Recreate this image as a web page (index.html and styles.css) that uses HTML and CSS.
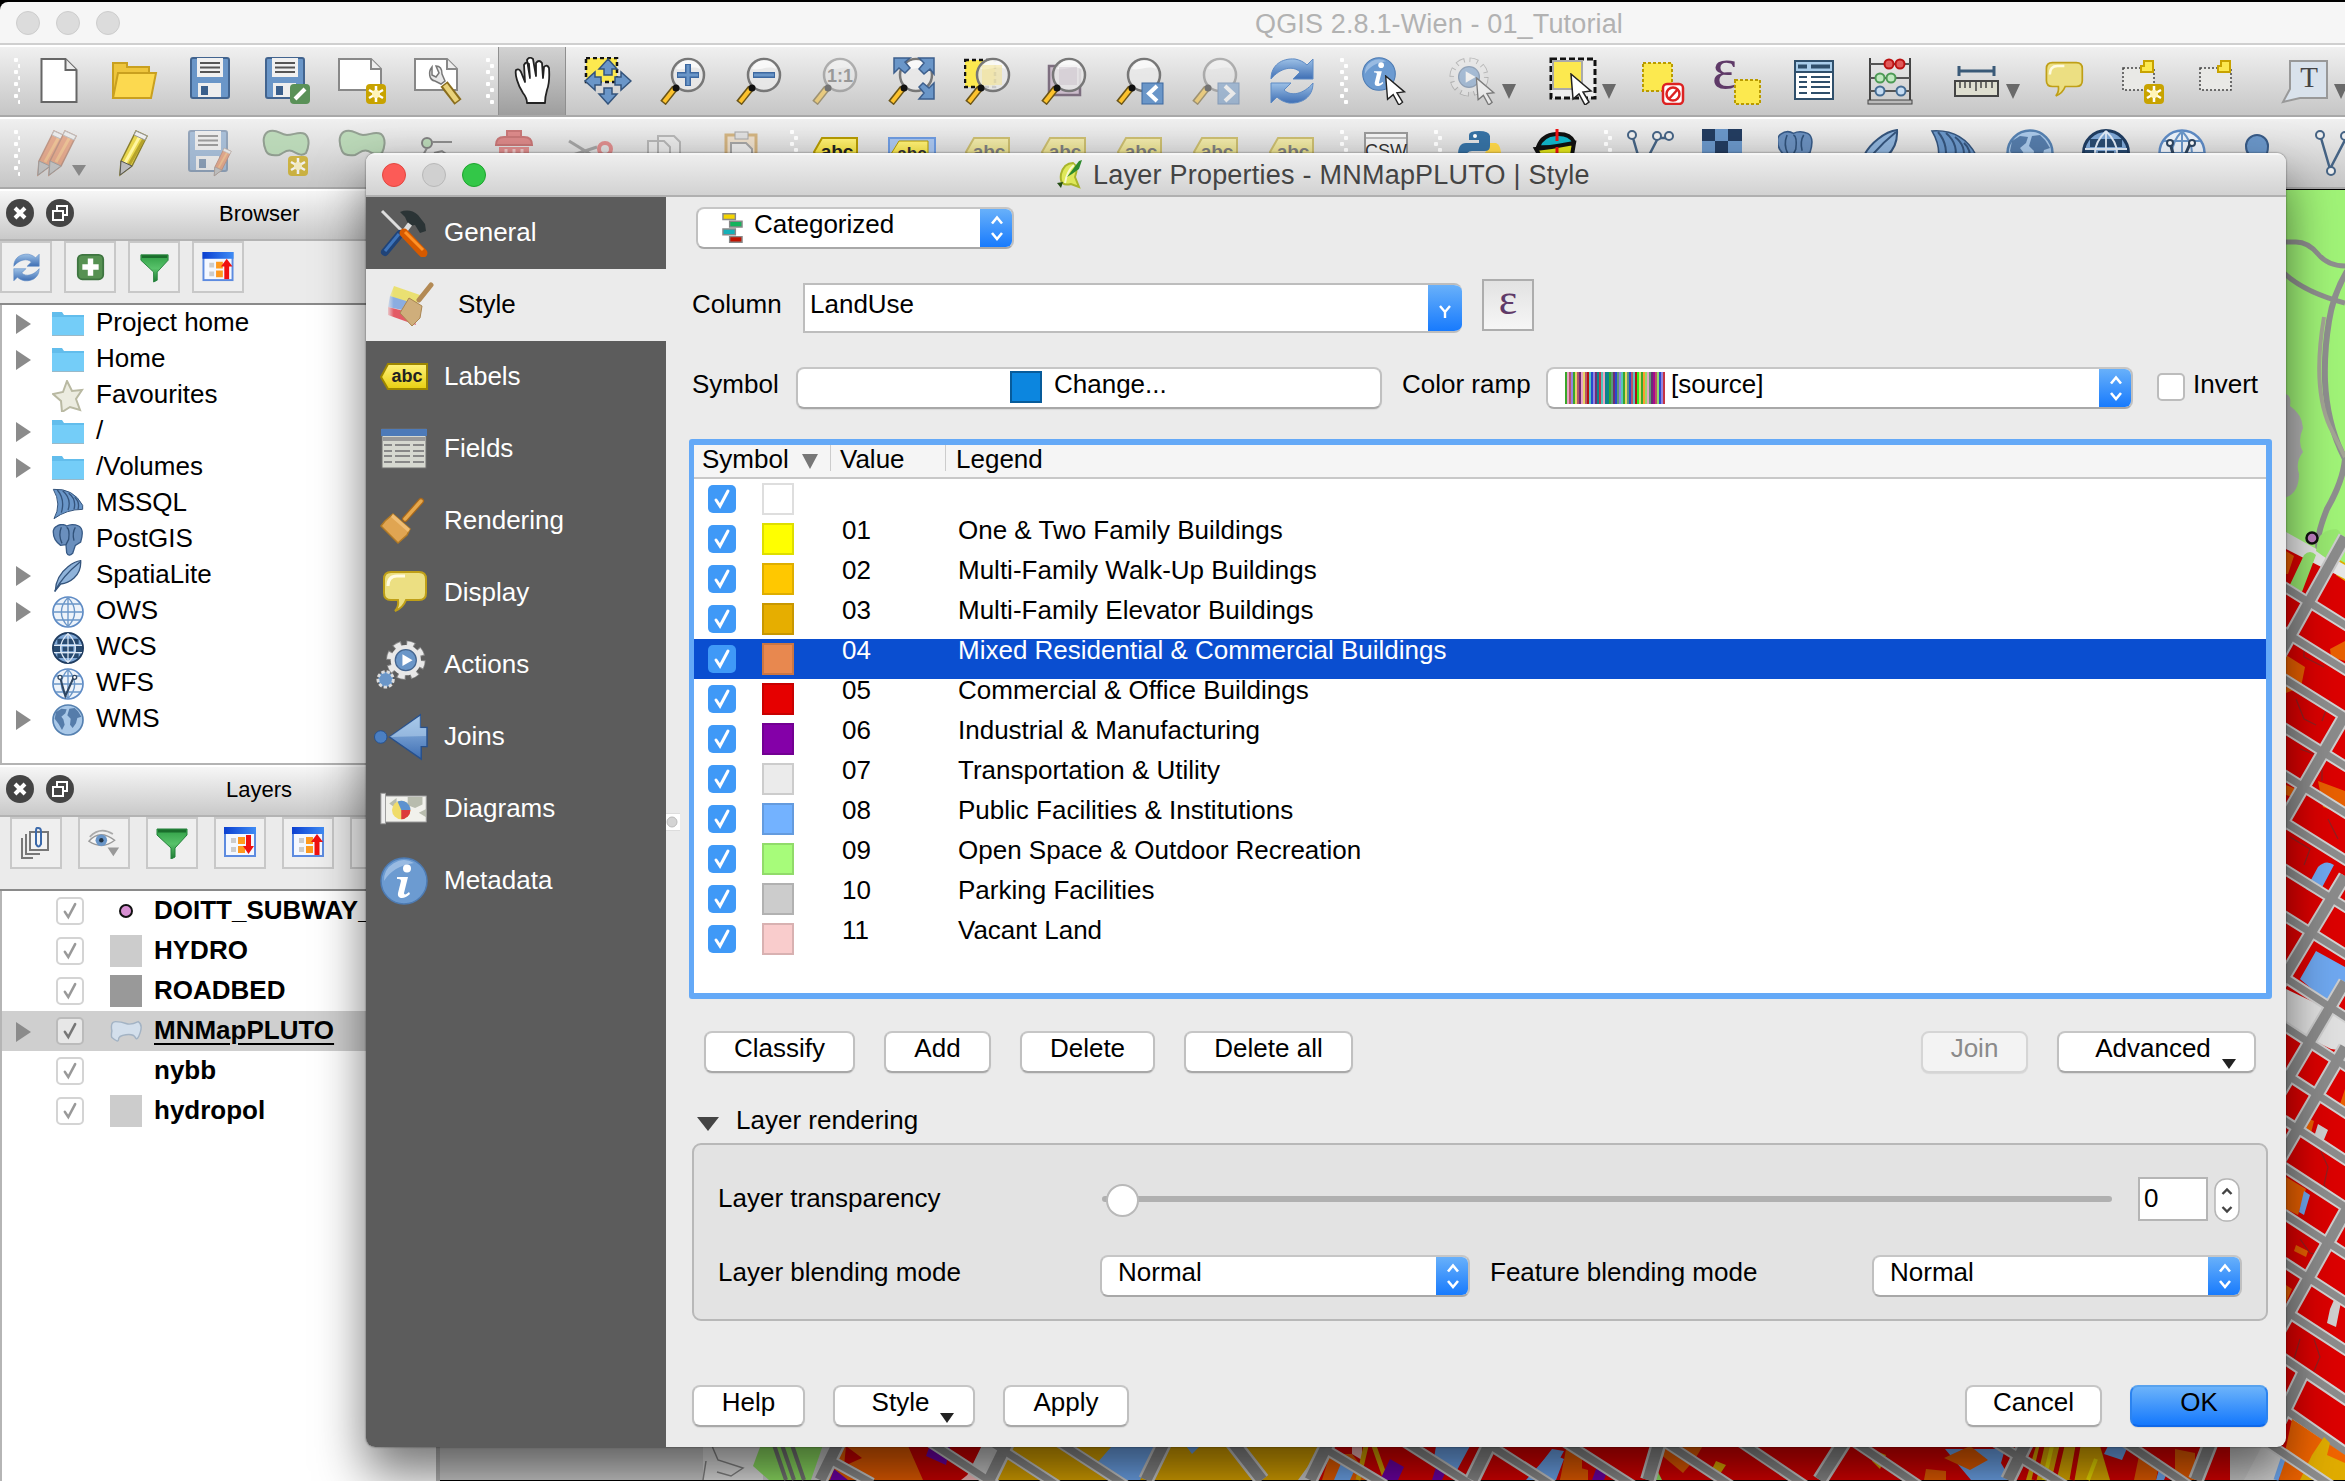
FILE: index.html
```html
<!DOCTYPE html>
<html lang="en">
<head>
<meta charset="utf-8">
<title>QGIS 2.8.1-Wien - 01_Tutorial</title>
<link rel="stylesheet" href="styles.css">
</head>
<body>
<svg class="defs" width="0" height="0" aria-hidden="true">
<defs>
<linearGradient id="g-blue" x1="0" y1="0" x2="0" y2="1"><stop offset="0" stop-color="#9cc0e6"/><stop offset="1" stop-color="#3f6fb4"/></linearGradient>
<linearGradient id="g-green" x1="0" y1="0" x2="0" y2="1"><stop offset="0" stop-color="#2f9e45"/><stop offset=".5" stop-color="#58c26a"/><stop offset="1" stop-color="#1d7a33"/></linearGradient>
<linearGradient id="g-head" x1="0" y1="0" x2="1" y2="0"><stop offset="0" stop-color="#0b3fd0"/><stop offset="1" stop-color="#3f8cf5"/></linearGradient>
<linearGradient id="g-tag" x1="0" y1="0" x2="0" y2="1"><stop offset="0" stop-color="#fff27a"/><stop offset="1" stop-color="#e8cf10"/></linearGradient>
<symbol id="new" viewBox="0 0 48 48"><path d="M7.500 2h24l11 11v32h-35z" fill="#fff" stroke="#666" stroke-width="2"/><path d="M31.500 2v11h11" fill="#ececec" stroke="#666" stroke-width="2"/></symbol>
<symbol id="open" viewBox="0 0 48 48"><path d="M3 41V6h14v4h22v8" fill="#eec53c" stroke="#c9a01f" stroke-width="2"/><path d="M3 41L8 16h38l-5 25z" fill="#fcd94f" stroke="#c9a01f" stroke-width="2"/></symbol>
<symbol id="save" viewBox="0 0 48 48"><rect x="5" y="1" width="38" height="40" rx="2" fill="#6a96c8" stroke="#42648f" stroke-width="2"/><rect x="11" y="1" width="26" height="19" fill="#f0f0f0"/><path d="M14 6h20M14 10.500h20M14 15h20" stroke="#555" stroke-width="2"/><rect x="12" y="26" width="23" height="14" fill="#eee"/><rect x="15" y="29" width="7" height="9" fill="#3a5f8c"/></symbol>
<symbol id="saveas" viewBox="0 0 48 48"><use href="#save" x="-1" width="48" height="48"/><rect x="28" y="27" width="20" height="20" rx="4" fill="#5a9158"/><path d="M33 42l10-10" stroke="#fff" stroke-width="4"/></symbol>
<symbol id="star-badge" viewBox="0 0 22 22"><rect x="1" y="1" width="20" height="20" rx="4" fill="#c8a300"/><path d="M11 3v16M4 7l14 8M4 15l14-8" stroke="#fff" stroke-width="2.500"/><circle cx="11" cy="11" r="4" fill="#fff4b8"/></symbol>
<symbol id="composer" viewBox="0 0 48 48"><path d="M1 2h32l10 10v21H1z" fill="#fff" stroke="#888" stroke-width="2"/><path d="M33 2v10h10" fill="#eee" stroke="#888" stroke-width="2"/></symbol>
<symbol id="newcomp" viewBox="0 0 48 48"><use href="#composer" width="48" height="48"/><use href="#star-badge" x="27" y="26" width="22" height="22"/></symbol>
<symbol id="compmgr" viewBox="0 0 48 48"><use href="#composer" width="48" height="48"/><path d="M18 10c-4 5-3 13 3 14l6 3 4-3-3-7c0-5-2-8-6-8l3 7-3 4-4-2z" fill="#e8e8e8" stroke="#777" stroke-width="1.500"/><path d="M30 27l14 18" stroke="#8a6d1c" stroke-width="9"/><path d="M31 28l12 16" stroke="#e9d27a" stroke-width="5"/></symbol>
<symbol id="hand" viewBox="0 0 48 48"><path d="M17 46q0-5-4-10-4-6-6-13-2-7-1-10 3-2 5 2l4 10-1-17q2-4 5-1l1 14-3-18q2-4 6-1l3 17V6q3-4 6 0l1 15 1-11q3-3 5 1 1 14-2 22-2 7-2 13z" transform="translate(2 0)" fill="#fff" stroke="#222" stroke-width="1.800" stroke-linejoin="round"/></symbol>
<symbol id="pansel" viewBox="0 0 48 48"><rect x="2" y="1" width="31" height="24" fill="#fce94f" stroke="#111" stroke-width="2.500" stroke-dasharray="4 3"/><path d="M24 2l9 10h-5v6h-8v-6h-5zM24 47l9-10h-5v-6h-8v6h-5zM1 24l10-9v5h6v8h-6v5zM47 24l-10-9v5h-6v8h6v5z" fill="#6a96c8" stroke="#34547c" stroke-width="1.500"/></symbol>
<symbol id="mag" viewBox="0 0 48 48"><path d="M3 46L15 31" stroke="#6b5416" stroke-width="7"/><path d="M4 45L15 31" stroke="#fcc22d" stroke-width="4"/><circle cx="28" cy="18" r="16" fill="#e9e9e9" fill-opacity=".85" stroke="#777" stroke-width="2.500"/><path d="M16 12a13 13 0 0 1 12-9c8 0 12 5 12 9-8-4-16 2-24 0z" fill="#fff" opacity=".7"/><circle cx="16" cy="31" r="3.500" fill="#111"/></symbol>
<symbol id="zin" viewBox="0 0 48 48"><use href="#mag" width="48" height="48"/><path d="M28 7v22M17 18h22" stroke="#3d68a0" stroke-width="6"/><path d="M28 8v20M18 18h20" stroke="#6a96c8" stroke-width="3"/></symbol>
<symbol id="zout" viewBox="0 0 48 48"><use href="#mag" width="48" height="48"/><path d="M17 18h22" stroke="#3d68a0" stroke-width="6"/><path d="M18 18h20" stroke="#6a96c8" stroke-width="3"/></symbol>
<symbol id="z11" viewBox="0 0 48 48"><use href="#mag" width="48" height="48"/><text x="28" y="25" font-size="18" font-weight="bold" text-anchor="middle" fill="#555">1:1</text></symbol>
<symbol id="zfull" viewBox="0 0 48 48"><use href="#mag" width="48" height="48"/><path d="M6 1h16l-5 4 5 6-5 5-6-5-5 5zM46 1v16l-4-5-6 5-5-5 5-6-5-5zM46 42v-16l-5 5-6-5-4 4 5 6-5 6z" fill="#6a96c8" stroke="#3d5f8d" stroke-width="1.500"/></symbol>
<symbol id="zsel" viewBox="0 0 48 48"><rect x="1" y="3" width="30" height="27" fill="#fce94f" stroke="#111" stroke-width="2.500" stroke-dasharray="4 3"/><use href="#mag" x="1" width="48" height="48"/><rect x="18" y="8" width="20" height="20" fill="#f3e28a" opacity=".5"/></symbol>
<symbol id="zlayer" viewBox="0 0 48 48"><rect x="9" y="9" width="31" height="29" fill="#cbbccb" stroke="#7d6e7f" stroke-width="2.500"/><use href="#mag" x="1" width="48" height="48"/><rect x="19" y="10" width="18" height="18" fill="#c9c0c9" opacity=".5"/></symbol>
<symbol id="zlast" viewBox="0 0 48 48"><use href="#mag" width="48" height="48"/><rect x="26" y="26" width="21" height="21" fill="#6a96c8" stroke="#3d68a0"/><path d="M41 29l-8 7.500 8 7.500" fill="none" stroke="#fff" stroke-width="4"/></symbol>
<symbol id="znext" viewBox="0 0 48 48"><use href="#mag" width="48" height="48"/><rect x="26" y="26" width="21" height="21" fill="#6a96c8" stroke="#3d68a0"/><path d="M33 29l8 7.500-8 7.500" fill="none" stroke="#fff" stroke-width="4"/></symbol>
<symbol id="refresh" viewBox="0 0 48 48"><path d="M3 22C3 8 14 1 27 2c5 1 9 3 12 6l6-6v20H25l7-7C25 8 12 11 3 22z" fill="url(#g-blue)" stroke="#5d8ac4"/><path d="M45 26c0 14-11 21-24 20-5-1-9-3-12-6l-6 6V26h20l-7 7c7 7 20 4 29-7z" fill="url(#g-blue)" stroke="#5d8ac4"/></symbol>
<symbol id="cursor" viewBox="0 0 24 32"><path d="M1 1l20 17-8 1 6 10-4 3-6-11-6 5z" fill="#fff" stroke="#222" stroke-width="1.500"/></symbol>
<symbol id="info" viewBox="0 0 48 48"><circle cx="24" cy="24" r="23" fill="#6c9bd1" stroke="#4d7bb3" stroke-width="1.500"/><path d="M4 24A20 20 0 0 1 34 6C20 8 10 14 4 24z" fill="#a5c3e6" opacity=".8"/><circle cx="27" cy="11.500" r="4" fill="#fff"/><path d="M17 20h11l-4 16c0 2 2 2 5-1l1 2c-6 6-13 5-12-1l3-12c0-2-2-2-4-2z" fill="#fff"/></symbol>
<symbol id="identify" viewBox="0 0 48 48"><use href="#info" x="0" y="0" width="34" height="34"/><use href="#cursor" x="22" y="18" width="24" height="30"/></symbol>
<symbol id="gear" viewBox="0 0 48 48"><circle cx="24" cy="24" r="18" fill="none" stroke="#8a8a8a" stroke-width="11" stroke-dasharray="9 5.137"/><circle cx="24" cy="24" r="18" fill="none" stroke="#e8e8e8" stroke-width="9" stroke-dasharray="7 7.137" stroke-dashoffset="-1"/><circle cx="24" cy="24" r="18" fill="#e8e8e8"/><circle cx="24" cy="24" r="12.500" fill="#6a96c8" stroke="#44658f" stroke-width="1.500"/><path d="M20 17l12 7-12 7z" fill="#fff"/></symbol>
<symbol id="action" viewBox="0 0 48 48"><use href="#gear" x="0" y="0" width="40" height="40"/><use href="#cursor" x="26" y="20" width="22" height="28"/></symbol>
<symbol id="select" viewBox="0 0 48 48"><rect x="2" y="2" width="44" height="39" fill="#eee" stroke="#111" stroke-width="3" stroke-dasharray="6 3"/><rect x="4" y="4" width="29" height="28" fill="#fce94f" stroke="#aaa" stroke-width="2"/><use href="#cursor" x="20" y="16" width="26" height="32"/></symbol>
<symbol id="deselect" viewBox="0 0 48 48"><rect x="5" y="6" width="29" height="28" fill="#fce94f" stroke="#b99b00" stroke-width="2" stroke-dasharray="3 2"/><rect x="25" y="27" width="20" height="20" rx="4" fill="#fff" stroke="#d22" stroke-width="2.500"/><circle cx="35" cy="37" r="6.500" fill="none" stroke="#d22" stroke-width="2.500"/><path d="M31 42l9-10" stroke="#d22" stroke-width="2.500"/></symbol>
<symbol id="eps" viewBox="0 0 48 48"><text x="-2" y="31" font-family="Liberation Serif, serif" font-size="60" fill="#5f3a68">ε</text><rect x="21" y="23" width="25" height="24" fill="#fce94f" stroke="#b99b00" stroke-width="2" stroke-dasharray="3 2"/></symbol>
<symbol id="table" viewBox="0 0 48 48"><rect x="5" y="4" width="38" height="38" fill="#fff" stroke="#2f4f6b" stroke-width="2"/><rect x="6" y="5" width="36" height="9" fill="#a9cdea"/><path d="M8 9.500h9M21 9.500h19" stroke="#2f4f6b" stroke-width="4"/><path d="M6 15h36" stroke="#2f4f6b" stroke-width="2"/><path d="M9 20h8M21 20h19M9 25h8M21 25h19M9 30h8M21 30h19M9 36h8M21 36h19" stroke="#2f4f6b" stroke-width="2"/></symbol>
<symbol id="abacus" viewBox="0 0 48 48"><path d="M4 1v44M44 1v44" stroke="#444" stroke-width="2"/><path d="M4 7h40M4 21h40M4 34h40" stroke="#555" stroke-width="2"/><rect x="2" y="43" width="44" height="4" fill="#bbb" stroke="#444"/><g stroke-width="2"><g fill="#e05a5a" stroke="#b11"><circle cx="23" cy="7" r="4.500"/><circle cx="34" cy="7" r="4.500"/></g><g fill="#bfe8bf" stroke="#4d9a55"><circle cx="14" cy="21" r="4.500"/><circle cx="25" cy="21" r="4.500"/></g><g fill="#c6dcf2" stroke="#456c93"><circle cx="14" cy="34" r="4.500"/><circle cx="35" cy="34" r="4.500"/></g></g></symbol>
<symbol id="measure" viewBox="0 0 48 48"><path d="M6 9v10M41 9v10M6 14h35" stroke="#3a5a78" stroke-width="3"/><rect x="2" y="24" width="43" height="15" fill="#deded0" stroke="#444" stroke-width="2"/><path d="M7 25v6M12 25v6M17 25v6M23 25v9M28 25v6M33 25v6M39 25v6" stroke="#444" stroke-width="1.500"/></symbol>
<symbol id="bubble" viewBox="0 0 48 48"><path d="M11 3h28q7 0 7 7v14q0 7-7 7H26q-3 8-11 11 4-4 3-11h-7q-7 0-7-7V10q0-7 7-7z" fill="#ecdf82" stroke="#bf9f17" stroke-width="2"/><path d="M8 17q0-10 9-10h8" fill="none" stroke="#fffbe0" stroke-width="3"/></symbol>
<symbol id="bubbles" viewBox="0 0 48 48"><use href="#bubble" x="1" y="1" width="41" height="45"/></symbol>
<symbol id="bm" viewBox="0 0 48 48"><rect x="6" y="11" width="31" height="22" fill="#e9e9e6" stroke="#444" stroke-width="1.500" stroke-dasharray="2 2"/><path d="M27 4h9v11H24v-6h3z" fill="#fce94f" stroke="#c8a300" stroke-width="2"/></symbol>
<symbol id="bmnew" viewBox="0 0 48 48"><use href="#bm" x="-1" width="48" height="48"/><use href="#star-badge" x="25" y="26" width="22" height="22"/></symbol>
<symbol id="tann" viewBox="0 0 48 48"><path d="M9 4h37v37H19L2 45l7-13z" fill="#d9e2ec" stroke="#999" stroke-width="2"/><text x="28" y="30" font-family="Liberation Serif, serif" font-size="29" text-anchor="middle" fill="#444">T</text></symbol>
<symbol id="pencil" viewBox="0 0 48 48"><path d="M11 32L26 2l11 5-15 30-12 9z" fill="#e8d64d" stroke="#8a7f2c" stroke-width="1.500"/><path d="M15 34L31 5" stroke="#fff6a0" stroke-width="3"/><path d="M19 36L35 8" stroke="#b6a32a" stroke-width="3"/><path d="M11 32l11 5-12 9z" fill="#bbb" stroke="#555"/><path d="M26 2l11 5-2 4-11-5z" fill="#eee" stroke="#999"/></symbol>
<symbol id="redpencil" viewBox="0 0 48 48"><path d="M11 32L26 2l11 5-15 30-12 9z" fill="#e0713d" stroke="#9c4e2e" stroke-width="1.500"/><path d="M17 33L32 6" stroke="#f3a04b" stroke-width="3"/><path d="M11 32l11 5-12 9z" fill="#aaa" stroke="#666"/><path d="M26 2l11 5-2 4-11-5z" fill="#eee" stroke="#999"/></symbol>
<symbol id="edits" viewBox="0 0 48 48"><use href="#redpencil" x="-6" width="48" height="48"/><use href="#redpencil" x="5" width="48" height="48"/></symbol>
<symbol id="savee" viewBox="0 0 48 48"><use href="#save" x="-2" y="1" width="48" height="48"/><use href="#redpencil" x="22" y="18" width="30" height="30"/></symbol>
<symbol id="blob" viewBox="0 0 48 48"><path d="M4 22C0 12 1 4 8 2c8-2 10 4 17 4S37 2 43 5c6 5 3 15 1 19-5 4-9 0-14-2-6-2-8 2-13 4-7 1-11 0-13-4z" fill="#a8d3a4" stroke="#6d7f6c" stroke-width="2"/></symbol>
<symbol id="blobnew" viewBox="0 0 48 48"><use href="#blob" width="48" height="48"/><use href="#star-badge" x="25" y="26" width="22" height="22"/></symbol>
<symbol id="node" viewBox="0 0 48 48"><circle cx="13" cy="14" r="5" fill="#a8d3a4" stroke="#555" stroke-width="2"/><path d="M18 13h20M13 19l-5 9M20 24l8-2 8 6" stroke="#666" stroke-width="2" fill="none"/></symbol>
<symbol id="trash" viewBox="0 0 48 48"><path d="M17 7V2h14v5M6 16q0-8 8-8h20q8 0 8 8z" fill="#d85f5f" stroke="#b44" stroke-width="2"/><path d="M9 18h30v28H9z" fill="#d66"/><path d="M16 20v24M24 20v24M32 20v24" stroke="#f3b8b8" stroke-width="3"/></symbol>
<symbol id="cut" viewBox="0 0 48 48"><path d="M3 12l26 16M7 26l24-8" stroke="#888" stroke-width="3"/><circle cx="39" cy="20" r="6" fill="none" stroke="#d66" stroke-width="4"/></symbol>
<symbol id="copy" viewBox="0 0 48 48"><path d="M16 7h16l6 6v22H16zM6 12h16l6 6v22H6z" fill="#eee" stroke="#888" stroke-width="2"/></symbol>
<symbol id="paste" viewBox="0 0 48 48"><path d="M8 6h30v36H8z" fill="#f0dcc0" stroke="#c99b51" stroke-width="3"/><rect x="17" y="3" width="13" height="7" fill="#ddd" stroke="#888"/><path d="M13 14h15l6 6v20H13z" fill="#eee" stroke="#888" stroke-width="2"/></symbol>
<symbol id="tag" viewBox="0 0 48 48"><path d="M2 23l8-14h35v28H10z" fill="url(#g-tag)" stroke="#b59a00" stroke-width="2"/><text x="25" y="29" font-size="19" font-weight="bold" text-anchor="middle" fill="#222">abc</text></symbol>
<symbol id="tagsel" viewBox="0 0 48 48"><rect x="1" y="9" width="46" height="34" fill="#a9c5ee" stroke="#6e9be0" stroke-width="2"/><path d="M3 25l8-13h29v28H11z" fill="url(#g-tag)" stroke="#b59a00"/><text x="24" y="30" font-size="17" font-weight="bold" text-anchor="middle" fill="#333">abc</text></symbol>
<symbol id="csw" viewBox="0 0 48 48"><rect x="3" y="4" width="42" height="40" fill="#f4f4f4" stroke="#999" stroke-width="2"/><path d="M4 9h40" stroke="#bbb" stroke-width="2"/><text x="24" y="28" font-size="18" text-anchor="middle" fill="#333">CSW</text></symbol>
<symbol id="python" viewBox="0 0 48 48"><path d="M34 14h6q5 2 5 12t-6 12H22z" fill="#ffd94a"/><path d="M2 26q0-12 8-12h13v-3H13V6q0-4 10-4t11 5v10q0 5-5 5H16q-6 0-6 7v4H6q-4-2-4-7z" fill="#3672a4"/><circle cx="19" cy="7" r="2" fill="#fff"/></symbol>
<symbol id="grassm" viewBox="0 0 48 48"><path d="M6 18Q10 6 24 5t18 8q-4 7-36 5z" fill="#12b6c9" stroke="#111" stroke-width="4"/><path d="M4 20q18-2 38-6l-3 18-10 6H14z" fill="#dfe21a" stroke="#111" stroke-width="4"/><path d="M25 0v12M25 18v10" stroke="#e11" stroke-width="3"/></symbol>
<symbol id="vlay" viewBox="0 0 48 48"><path d="M7 9l9 31L32 9h9" fill="none" stroke="#456384" stroke-width="2.500"/><g fill="#eee" stroke="#456384" stroke-width="2"><circle cx="6" cy="6" r="4"/><circle cx="31" cy="7" r="4"/><circle cx="43" cy="7" r="4"/><circle cx="17" cy="42" r="4"/></g></symbol>
<symbol id="checker" viewBox="0 0 48 48"><path d="M0 0h40v48H0z" fill="#6a96c8"/><path d="M0 0h13v12H0zM26 0h14v12H26zM13 12h13v13H13zM0 25h13v13H0zM26 25h14v13H26z" fill="#233c60"/></symbol>
<symbol id="pg" viewBox="0 0 48 48"><path d="M6 4Q14-2 22 3q8-4 18 0 9 5 3 24l-8 5-4 12q-6 6-9-1l-1-12-8 1Q1 24 2 10q1-4 4-6z" fill="#6a8fbd" stroke="#375a86" stroke-width="2"/><path d="M14 5q-5 12 1 24M22 5q5 2 3 18l-4 8M35 5q-5 8-2 20" fill="none" stroke="#2f5078" stroke-width="2"/></symbol>
<symbol id="pgb" viewBox="0 0 48 48"><use href="#pg" x="-2" y="0" width="38" height="42"/></symbol>
<symbol id="feather" viewBox="0 0 48 48"><path d="M5 46Q6 24 24 10 34 2 43 1q1 16-10 26-9 8-20 9z" fill="#8fb3da" stroke="#34547c" stroke-width="2"/><path d="M4 47Q16 24 42 3" fill="none" stroke="#34547c" stroke-width="2"/></symbol>
<symbol id="shell" viewBox="0 0 48 48"><path d="M2 2q30-2 44 24v6Q22 32 3 46q12-22-1-44z" fill="#6a96c8" stroke="#34547c" stroke-width="1.500"/><path d="M8 3q12 14 6 34M16 4q14 12 8 29M25 8q12 9 8 24M34 14q8 7 5 18" fill="none" stroke="#34547c" stroke-width="2"/></symbol>
<symbol id="globe" viewBox="0 0 48 48"><circle cx="24" cy="24" r="22.500" fill="#edf3fa" stroke="#5d8ac4" stroke-width="2.500"/><path d="M24 2v44M2 24h44M6 12h36M6 36h36M24 2Q4 24 24 46M24 2q20 22 0 44" fill="none" stroke="#6a96c8" stroke-width="2"/></symbol>
<symbol id="globed" viewBox="0 0 48 48"><circle cx="24" cy="24" r="22.500" fill="#7ea7d6" stroke="#1f3c60" stroke-width="3"/><path d="M8 10h32v8H8zM16 22h16v7H16zM8 32h32v7H8zM3 19h9v12H3zM36 19h9v12h-9z" fill="#284a70"/><path d="M24 2v44M3 20h42M3 31h42M24 2Q2 24 24 46M24 2q22 22 0 44" fill="none" stroke="#dfe9f5" stroke-width="1.800"/></symbol>
<symbol id="globev" viewBox="0 0 48 48"><use href="#globe" width="48" height="48"/><path d="M12 14l8 28 12-27h4" fill="none" stroke="#2f4763" stroke-width="3"/><circle cx="12" cy="14" r="3" fill="#fff" stroke="#2f4763" stroke-width="2"/><circle cx="34" cy="14" r="3" fill="#fff" stroke="#2f4763" stroke-width="2"/></symbol>
<symbol id="globem" viewBox="0 0 48 48"><circle cx="24" cy="24" r="22.500" fill="#a9c8e8" stroke="#5580b0" stroke-width="2.500"/><path d="M6 12l8-5 8 1-2 6-6 5 3 4 2 8-4 8-5-9-6-8zM26 7l8-1 5 5 5 8-6 2-2 8-5 7-4-5 1-9-5-5z" fill="#466f9f" opacity=".85"/></symbol>
<symbol id="comma" viewBox="0 0 48 48"><path d="M12 17a11 11 0 1 1 22 0q0 16-17 24 7-9 6-13-11 0-11-11z" fill="#6a96c8" stroke="#375a86" stroke-width="2"/></symbol>
<symbol id="filter" viewBox="0 0 32 32"><path d="M1 2h30v6L19 21v9l-4 2V21L1 8z" fill="url(#g-green)" stroke="#23813a"/><path d="M2 4h28" stroke="#1a6d2c" stroke-width="3"/></symbol>
<symbol id="plus" viewBox="0 0 32 32"><rect x="2" y="2" width="28" height="27" rx="5" fill="#569152" stroke="#3e7540" stroke-width="2"/><path d="M16 6v19M7 15.500h18" stroke="#fff" stroke-width="6"/></symbol>
<symbol id="expand" viewBox="0 0 32 32"><rect x="1" y="1" width="30" height="28" fill="#f4f8ff" stroke="#5d8be0" stroke-width="2"/><rect x="0" y="0" width="32" height="7" fill="url(#g-head)"/><path d="M7 11h5v5H7zM7 20h5v5H7z" fill="#ccc"/><path d="M14 10h7v7h-7zM14 19h7v7h-7z" fill="#ff9a1e"/><path d="M24.500 8v14" stroke="#f01010" stroke-width="5"/><path d="M19 19h11l-5.500 8z" fill="#f01010"/></symbol>
<symbol id="collapse" viewBox="0 0 32 32"><rect x="1" y="1" width="30" height="28" fill="#f4f8ff" stroke="#5d8be0" stroke-width="2"/><rect x="0" y="0" width="32" height="7" fill="url(#g-head)"/><path d="M7 11h5v5H7zM7 20h5v5H7z" fill="#ccc"/><path d="M14 10h7v7h-7zM14 19h7v7h-7z" fill="#ff9a1e"/><path d="M25 12v16" stroke="#f01010" stroke-width="5"/><path d="M19 15h12l-6-8z" fill="#f01010"/></symbol>
<symbol id="group" viewBox="0 0 32 32"><path d="M2 11v20h11M6 7v20h14" fill="none" stroke="#777" stroke-width="2"/><rect x="10" y="5" width="18" height="18" fill="#f4f4f4" stroke="#777" stroke-width="2"/><path d="M16 15V4q0-4 2.500-3 2.500 0 2.500 4v12q-2.500 5-5 0V9" fill="none" stroke="#3b69aa" stroke-width="2"/></symbol>
<symbol id="eye" viewBox="0 0 36 32"><path d="M1 14Q13 0 30 13 16 24 1 14z" fill="#f5f5f5" stroke="#999" stroke-width="1.500"/><path d="M2 9Q14-3 28 6" fill="none" stroke="#aaa" stroke-width="2"/><circle cx="15" cy="13" r="6.500" fill="#6a96c8"/><circle cx="15" cy="13" r="2.500" fill="#234"/><path d="M22 21h13l-6.500 10z" fill="#999"/></symbol>
<symbol id="folder" viewBox="0 0 32 26"><path d="M0 1h10l2 3h20v21H0z" fill="#62bdec"/><path d="M0 6h32v18H0z" fill="#74cdf8"/><path d="M0 24.500h32" stroke="#9ab9c8"/></symbol>
<symbol id="star" viewBox="0 0 32 32"><path d="M15 1l5 10 10-1-6 9 4 11-10-3-8 5-1-11-8-7 10-2z" fill="#ecece0" stroke="#b9b9a2" stroke-width="2"/></symbol>
<symbol id="tools" viewBox="0 0 48 48"><path d="M2 2l22 22" stroke="#ddd" stroke-width="3"/><path d="M20 3q10-4 18 3l7 9 1 7-6 2-5-8-6 1-4-9z" fill="#2b3436"/><path d="M30 15l-6 8" stroke="#ddd" stroke-width="5"/><path d="M20 25L5 43" stroke="#1f4378" stroke-width="8" stroke-linecap="round"/><path d="M19 25L5 42" stroke="#3e74ba" stroke-width="3"/><path d="M24 24l19 20" stroke="#d65a00" stroke-width="9" stroke-linecap="round"/><path d="M25 23l18 18" stroke="#ff9226" stroke-width="3"/></symbol>
<symbol id="brush" viewBox="0 0 48 48"><path d="M41 4L25 22" stroke="#a8681b" stroke-width="6" stroke-linecap="round"/><path d="M41 4L25 22" stroke="#e6a84d" stroke-width="3.500" stroke-linecap="round"/><path d="M13 17l17 15-3 6-9 8L1 29l4-5z" fill="#e0a552" stroke="#b27a25" stroke-width="1.500"/><path d="M13 17l17 15-2 3L11 20z" fill="#efbd74"/></symbol>
<symbol id="stylei" viewBox="0 0 48 48"><defs><linearGradient id="fade" x1="0" x2="1"><stop offset="0" stop-color="#ebebeb"/><stop offset=".35" stop-color="#ebebeb" stop-opacity="0"/></linearGradient></defs><g opacity=".85"><path d="M8 5l26 9-4 12L4 15z" fill="#eadf5d"/><path d="M4 15l26 8-4 8L2 26z" fill="#7ba3df"/><path d="M2 26l24 6 4 12L2 34z" fill="#e2424f"/></g><path d="M0 4h22v34H0z" fill="url(#fade)"/><path d="M45 4L33 19" stroke="#b38a55" stroke-width="5" stroke-linecap="round"/><path d="M23 17l13 8-2 12-8 8-12-13z" fill="#cfae7b" stroke="#a98552"/></symbol>
<symbol id="tabl" viewBox="0 0 48 48"><rect x="2" y="4" width="44" height="39" fill="#d6d8d0" stroke="#6e6e6e"/><path d="M1 4h46v7H1z" fill="#4d7ab8"/><path d="M3 12h42v4H3z" fill="#999"/><path d="M4 20h8M15 20h15M33 20h11M4 26h8M15 26h15M33 26h11M4 31h8M15 31h15M33 31h11M4 37h8M15 37h15M33 37h11" stroke="#888" stroke-width="2"/></symbol>
<symbol id="labtag" viewBox="0 0 48 32"><path d="M1 16L8 3h39v25H8z" fill="url(#g-tag)" stroke="#9d8600" stroke-width="2"/><text x="27" y="21" font-size="18" font-weight="bold" text-anchor="middle" fill="#222">abc</text></symbol>
<symbol id="actions" viewBox="0 0 52 52"><use href="#gear" x="10" y="0" width="42" height="42"/><circle cx="10" cy="41" r="8" fill="#6a96c8" stroke="#ddd" stroke-width="3" stroke-dasharray="3.500 2"/></symbol>
<symbol id="join" viewBox="0 0 56 48"><path d="M16 24L48 1v13h7v20h-6v13z" fill="url(#g-blue)" stroke="#27508c" stroke-width="1.500"/><path d="M16 24L48 2v13h6v8z" fill="#b5d1ec" opacity=".55"/><circle cx="7" cy="24" r="6.500" fill="#4b7fc2" stroke="#27508c"/></symbol>
<symbol id="diag" viewBox="0 0 52 36"><rect x="4" y="4" width="46" height="28" fill="#f1f1ec" stroke="#aaa"/><path d="M30 5h16v8l-8 4-8-3zM10 12l8-6v12zM42 22l8-4v9z" fill="#b8bcae"/><rect x="1" y="1" width="5" height="33" fill="#eee" stroke="#999"/><circle cx="23" cy="19" r="10" fill="#f0dc6a"/><path d="M23 19h10a10 10 0 0 1-10 10z" fill="#dc3b3b"/><path d="M23 19h10A10 10 0 0 0 19 10z" fill="#5d92d0"/></symbol>
<symbol id="tick" viewBox="0 0 28 28"><path d="M8 15l4 6 8-15" fill="none" stroke="currentColor" stroke-width="3" stroke-linecap="round"/></symbol>
<symbol id="updown" viewBox="0 0 32 42"><path d="M11 16.500l5-6 5 6M11 26l5 6 5-6" fill="none" stroke="#fff" stroke-width="2.600"/></symbol>
<symbol id="poly" viewBox="0 0 34 24"><path d="M2 12Q0 2 6 2t11 2 13-2q5 3 2 12t-5 5-10-3-8 5-7-2q-1-2 0-7z" fill="#d3dfec" stroke="#a3b3c4" stroke-width="1.500"/></symbol>
</defs>
</svg>

<div class="app">
  <header class="titlebar"><div class="lights"><i></i><i></i><i></i></div><span class="apptitle">QGIS 2.8.1-Wien - 01_Tutorial</span></header>

  <div class="toolbar first">
    <b class="grip lead"></b>
    <span class="tool"><svg><use href="#new"/></svg></span><span class="tool"><svg><use href="#open"/></svg></span><span class="tool"><svg><use href="#save"/></svg></span><span class="tool"><svg><use href="#saveas"/></svg></span><span class="tool"><svg><use href="#newcomp"/></svg></span><span class="tool"><svg><use href="#compmgr"/></svg></span>
    <b class="grip"></b>
    <span class="tool on"><svg><use href="#hand"/></svg></span><span class="tool"><svg><use href="#pansel"/></svg></span><span class="tool"><svg><use href="#zin"/></svg></span><span class="tool"><svg><use href="#zout"/></svg></span><span class="tool dim"><svg><use href="#z11"/></svg></span><span class="tool"><svg><use href="#zfull"/></svg></span><span class="tool"><svg><use href="#zsel"/></svg></span><span class="tool"><svg><use href="#zlayer"/></svg></span><span class="tool"><svg><use href="#zlast"/></svg></span><span class="tool dim"><svg><use href="#znext"/></svg></span><span class="tool"><svg><use href="#refresh"/></svg></span>
    <b class="grip"></b>
    <span class="tool"><svg><use href="#identify"/></svg></span><span class="tool wide"><svg class="faded"><use href="#action"/></svg><em></em></span><span class="tool wide"><svg><use href="#select"/></svg><em></em></span><span class="tool"><svg><use href="#deselect"/></svg></span><span class="tool"><svg><use href="#eps"/></svg></span><span class="tool"><svg><use href="#table"/></svg></span><span class="tool"><svg><use href="#abacus"/></svg></span><span class="tool wide"><svg><use href="#measure"/></svg><em></em></span><span class="tool"><svg><use href="#bubbles"/></svg></span><span class="tool"><svg><use href="#bmnew"/></svg></span><span class="tool"><svg><use href="#bm"/></svg></span><span class="tool wide"><svg><use href="#tann"/></svg><em></em></span>
  </div>

  <div class="toolbar second">
    <b class="grip lead"></b>
    <span class="tool drop"><svg class="faded"><use href="#edits"/></svg><em></em></span><span class="tool"><svg><use href="#pencil"/></svg></span><span class="tool dim"><svg><use href="#savee"/></svg></span><span class="tool dim2"><svg><use href="#blobnew"/></svg></span><span class="tool dim2"><svg><use href="#blob"/></svg></span><span class="tool dim2"><svg><use href="#node"/></svg></span><span class="tool dim2"><svg><use href="#trash"/></svg></span><span class="tool dim2"><svg><use href="#cut"/></svg></span><span class="tool dim"><svg><use href="#copy"/></svg></span><span class="tool dim2"><svg><use href="#paste"/></svg></span>
    <b class="grip"></b>
    <span class="tool"><svg><use href="#tag"/></svg></span><span class="tool"><svg><use href="#tagsel"/></svg></span><span class="tool dim"><svg><use href="#tag"/></svg></span><span class="tool dim"><svg><use href="#tag"/></svg></span><span class="tool dim"><svg><use href="#tag"/></svg></span><span class="tool dim"><svg><use href="#tag"/></svg></span><span class="tool dim"><svg><use href="#tag"/></svg></span>
    <b class="grip"></b><span class="tool"><svg><use href="#csw"/></svg></span>
    <b class="grip"></b><span class="tool"><svg><use href="#python"/></svg></span><span class="tool"><svg><use href="#grassm"/></svg></span>
    <b class="grip"></b><span class="tool"><svg><use href="#vlay"/></svg></span><span class="tool"><svg><use href="#checker"/></svg></span><span class="tool"><svg><use href="#pgb"/></svg></span><span class="tool"><svg><use href="#feather"/></svg></span><span class="tool"><svg><use href="#shell"/></svg></span><span class="tool"><svg><use href="#globem"/></svg></span><span class="tool"><svg><use href="#globed"/></svg></span><span class="tool"><svg><use href="#globev"/></svg></span><span class="tool"><svg><use href="#comma"/></svg></span><span class="tool last"><svg><use href="#vlay"/></svg></span>
  </div>

  <main class="work">
    <aside class="docks">
      <section class="dock browser">
        <h2><svg class="ctl" viewBox="0 0 28 28"><circle cx="14" cy="14" r="14"/><path d="M9 9l10 10M19 9L9 19" stroke-width="4"/></svg><svg class="ctl" viewBox="0 0 28 28"><circle cx="14" cy="14" r="14"/><path d="M11 11V7h10v9h-3M7 12h10v9H7z" stroke-width="2"/></svg><span class="dt">Browser</span></h2>
        <div class="dtools near"><span><svg><use href="#refresh"/></svg></span><span><svg><use href="#plus"/></svg></span><span><svg><use href="#filter"/></svg></span><span><svg><use href="#collapse"/></svg></span></div>
        <ul class="tree">
          <li><i class="exp"></i><svg><use href="#folder"/></svg>Project home</li>
          <li><i class="exp"></i><svg><use href="#folder"/></svg>Home</li>
          <li><i></i><svg><use href="#star"/></svg>Favourites</li>
          <li><i class="exp"></i><svg><use href="#folder"/></svg>/</li>
          <li><i class="exp"></i><svg><use href="#folder"/></svg>/Volumes</li>
          <li><i></i><svg><use href="#shell"/></svg>MSSQL</li>
          <li><i></i><svg><use href="#pg"/></svg>PostGIS</li>
          <li><i class="exp"></i><svg><use href="#feather"/></svg>SpatiaLite</li>
          <li><i class="exp"></i><svg><use href="#globe"/></svg>OWS</li>
          <li><i></i><svg><use href="#globed"/></svg>WCS</li>
          <li><i></i><svg><use href="#globev"/></svg>WFS</li>
          <li><i class="exp"></i><svg><use href="#globem"/></svg>WMS</li>
        </ul>
      </section>
      <section class="dock layers">
        <h2><svg class="ctl" viewBox="0 0 28 28"><circle cx="14" cy="14" r="14"/><path d="M9 9l10 10M19 9L9 19" stroke-width="4"/></svg><svg class="ctl" viewBox="0 0 28 28"><circle cx="14" cy="14" r="14"/><path d="M11 11V7h10v9h-3M7 12h10v9H7z" stroke-width="2"/></svg><span class="dt">Layers</span></h2>
        <div class="dtools far"><span><svg><use href="#group"/></svg></span><span><svg><use href="#eye"/></svg></span><span><svg><use href="#filter"/></svg></span><span><svg><use href="#expand"/></svg></span><span><svg><use href="#collapse"/></svg></span><span></span></div>
        <ul class="lay">
          <li><i></i><svg class="ck"><use href="#tick"/></svg><u class="dot"></u><span>DOITT_SUBWAY_</span></li>
          <li><i></i><svg class="ck"><use href="#tick"/></svg><u class="light"></u><span>HYDRO</span></li>
          <li><i></i><svg class="ck"><use href="#tick"/></svg><u class="dark"></u><span>ROADBED</span></li>
          <li class="cur"><i class="exp"></i><svg class="ck"><use href="#tick"/></svg><svg class="pl"><use href="#poly"/></svg><span>MNMapPLUTO</span></li>
          <li><i></i><svg class="ck"><use href="#tick"/></svg><u></u><span>nybb</span></li>
          <li><i></i><svg class="ck"><use href="#tick"/></svg><u class="light"></u><span>hydropol</span></li>
        </ul>
      </section>
    </aside>

    <svg class="map" viewBox="440 191 1905 1290">
      <rect x="440" y="191" width="1905" height="1290" fill="#ccc"/>
      <!-- central park corner -->
      <path d="M2270 191h75v384l-75-42z" fill="#a0f377"/>
      <path d="M2284 395q8 0 6 12 12 8 13 22-6 14 0 24-8 10-4 22 0 20-15 24z" fill="#b3b3b3"/>
      <g fill="none" stroke="#8f8f8f" stroke-width="5">
        <path d="M2280 243h16q12 0 22 12t27 12"/><path d="M2280 270q20 22 65 34"/>
        <path d="M2347 272q-14 24-18 50-5 30-4 60 2 44 20 78-2 22-18 50-12 30-8 40" stroke-width="6"/>
        <path d="M2324 318q-12 70 6 110l15 30" stroke="#a3a594" stroke-width="4"/>
      </g>
      <!-- midtown east of the dialog -->
      <path d="M2270 533l75 42v906h-75z" fill="#dc0000"/>
      <path d="M2286 552l8 5-6 18h-2zM2286 656l19 12-4 20-15 6zM2330 650l15-8v20l-14-4zM2286 786l15 6-2 8-13-4zM2318 782l27 10v24l-22-8zM2305 1118l9 4-4 16-9-4zM2286 1178l20 12-8 26-12-6zM2345 1090l-6 18 6 4zM2296 1246l12 6-2 6-12-6zM2286 1286l6 4-6 14z" fill="#e86000"/>
      <path d="M2338 560l7 4v18l-9-6z" fill="#e2ad00"/>
      <path d="M2286 533l59 33v14l-59-30z" fill="#e6e6e6"/>
      <path d="M2304 556q6-6 12 0l-16 42q-8 2-13-6zM2318 540q6-10 18-10 6 2 4 8l-10 24-14-10z" fill="#98e870"/>
      <path d="M2306 890l12-22q8-8 16-2l-16 30zM2300 980l16-28 29 16v26l-12 14z" fill="#6fa8f0"/><path d="M2304 1192l6 4-6 20-5-3z" fill="#6fa8f0"/>
      <path d="M2286 990l59 28v34l-14-2-45-22z" fill="#e0e0e0"/>
      <path d="M2318 1125l10 6-5 12-9-5zM2330 1310l7-16 5 4-6 30-9-4z" fill="#cfcfcf"/>
      <path d="M2292 640l12 6v12l20 10M2296 700l8 20 12 6M2300 750l22 8v24M2290 838l20 12-6 16M2320 1150l8 18-4 18 6 8M2300 1340l-6 20M2314 1340l6 18-6 14M2330 700l-8 22M2300 1240l10 14 16 4M2328 820l10 20" fill="none" stroke="#8f2020" stroke-width="1.200"/>
      <g fill="none">
        <path d="M2270 579l80 50M2270 624l80 50M2270 671l80 50M2270 720l80 50M2270 767l80 50M2270 814l80 50M2270 861l80 50M2270 908l80 50M2270 969l80 52M2270 1018l80 52M2270 1065l80 52M2270 1112l80 52M2270 1159l80 52M2270 1206l80 52M2270 1254l80 52M2270 1302l80 52M2270 1350l80 54M2270 1400l80 56" stroke="#d2d2d2" stroke-width="11"/>
        <path d="M2280 655l65-117M2280 828l65-112M2280 985l65-108M2280 1093l65-110M2280 1160l65-112M2280 1330l68-122M2280 1422l24-50" stroke="#cdcdcd" stroke-width="14"/>
        <path d="M2270 579l80 50M2270 624l80 50M2270 671l80 50M2270 720l80 50M2270 767l80 50M2270 814l80 50M2270 861l80 50M2270 908l80 50M2270 969l80 52M2270 1018l80 52M2270 1065l80 52M2270 1112l80 52M2270 1159l80 52M2270 1206l80 52M2270 1254l80 52M2270 1302l80 52M2270 1350l80 54M2270 1400l80 56" stroke="#8d8d8d" stroke-width="7"/>
        <path d="M2280 655l65-117M2280 828l65-112M2280 985l65-108M2280 1093l65-110M2280 1160l65-112M2280 1330l68-122M2280 1422l24-50" stroke="#8b8b8b" stroke-width="10"/>
      </g>
      <circle cx="2312" cy="539" r="5.500" fill="#bf7fbf" stroke="#111" stroke-width="2.500"/>
      <!-- strip below the dialog -->
      <g>
        <path d="M440 1440h263v41H440z" fill="#cfcfcf"/>
        <path d="M703 1440h60v41h-60z" fill="#e4e4e4"/>
        <path d="M712 1447l6 14 25 8-12 8-14-4M706 1462l-3 19" fill="none" stroke="#888" stroke-width="1.500"/>
        <path d="M763 1440h62l-14 41h-42l-16-14z" fill="#90e264"/>
        <path d="M772 1440l14 41M780 1440l14 41M790 1440l14 41" stroke="#777" stroke-width="4"/>
        <path d="M845 1440h60l30 41h-110z" fill="#e85d00"/>
        <path d="M846 1447l16 12-18 8zM905 1440h80l-20 41h-42z" fill="#cf0000"/>
        <path d="M932 1440h20l-6 26-20-9zM834 1470l14 11h-18z" fill="#7000a8"/>
        <path d="M975 1470l14 11h-28z" fill="#f4b9b9"/>
        <path d="M1008 1440h320l-30 41H992z" fill="#d9a300"/>
        <path d="M1118 1440h46l-24 41h-24l-18-18zM1186 1447h14l-8 8z" fill="#6fa8f0"/>
        <path d="M1330 1440h320v41h-340z" fill="#dc0000"/>
        <path d="M1330 1455h22l20 26h-50z" fill="#e85d00"/><path d="M1342 1462l14 6-6 13h-16z" fill="#6fa8f0"/>
        <path d="M1352 1447h10v14l-10-6z" fill="#f4b9b9"/><path d="M1366 1447l-8 34M1374 1447l12 34" stroke="#d9a300" stroke-width="5"/>
        <path d="M1390 1460l14 8-6 13h-18zM1436 1468l10 4-4 9h-10z" fill="#7000a8"/>
        <path d="M1436 1447h34l-14 26-22-14zM1552 1450l12 2-16 29h-20z" fill="#6fa8f0"/>
        <path d="M1568 1440h14v41h-22z" fill="#e85d00"/>
        <path d="M1650 1440h580v41h-590z" fill="#dc0000"/>
        <path d="M1675 1440h32l-12 20-12 14-24-20z" fill="#e85d00"/>
        <path d="M1550 1454l14 6-8 21h-30zM1945 1450h60l-4 14 10 17h-40z" fill="#6fa8f0"/>
        <path d="M1566 1465l22 6v10h-28z" fill="#e85d00"/>
        <path d="M1596 1470h12l-4 11h-12z" fill="#7000a8"/><path d="M1654 1465l8 16h-14z" fill="#90e264"/>
        <path d="M1716 1462l10 4-8 12-8-4zM1876 1452l10 4-6 14-8-8z" fill="#e2ad00"/>
        <path d="M1970 1447l18 14-18 10-26-12zM1926 1470l20 2v9h-22z" fill="#e85d00"/>
        <path d="M2036 1447h64l10 34h-84z" fill="#e0ac00"/>
        <path d="M2042 1447l-8 34M2062 1447l-8 34M2078 1447l-6 34" stroke="#d80000" stroke-width="5"/><path d="M2052 1447l-8 34M2096 1460l-8 21" stroke="#f0e000" stroke-width="4"/>
        <path d="M2108 1447h20l-6 14-18-6zM2160 1467h10l-6 14h-8z" fill="#6fa8f0"/>
        <path d="M2140 1452l20 8-4 21h-22zM2175 1450l20 4v27h-20z" fill="#e85d00"/>
        <path d="M2262 1447l24 12-10 22h-32z" fill="#d6d6d6"/>
        <path d="M2292 1420l53 36v25h-66z" fill="#f06400"/>
        <path d="M2312 1456l12-18 6 6-3 12 18 8v17h-45z" fill="#e0ac00"/><path d="M2276 1481l10-30" stroke="#6fa8f0" stroke-width="5"/>
      </g>
      <g fill="none">
        <path d="M840 1440l-20 41M1009 1440l-20 41M1166 1440l-20 41M1330 1440l-20 41M1492 1440l-20 41M1660 1440l-12 41M1846 1440l-26 41M2028 1440l-20 41M2212 1440l-16 41M1230 1440l32 41" stroke="#c9c9c9" stroke-width="16"/>
        <path d="M832 1462l40 22M925 1440l80 52M986 1440l80 52M1054 1440l80 52M1325 1450l60 36M1400 1440l86 55M1480 1440l86 55M1560 1440l86 55M1660 1440l76 50M1736 1440l80 54M1850 1440l80 54M1990 1440l90 56M2120 1440l80 54M2262 1440l80 54" stroke="#cdcdcd" stroke-width="11"/>
        <path d="M840 1440l-20 41M1009 1440l-20 41M1166 1440l-20 41M1330 1440l-20 41M1492 1440l-20 41M1660 1440l-12 41M1846 1440l-26 41M2028 1440l-20 41M2212 1440l-16 41M1230 1440l32 41" stroke="#8b8b8b" stroke-width="11"/>
        <path d="M832 1462l40 22M925 1440l80 52M986 1440l80 52M1054 1440l80 52M1325 1450l60 36M1400 1440l86 55M1480 1440l86 55M1560 1440l86 55M1660 1440l76 50M1736 1440l80 54M1850 1440l80 54M1990 1440l90 56M2120 1440l80 54M2262 1440l80 54" stroke="#8d8d8d" stroke-width="7"/>
      </g>
    </svg>
  </main>
</div>

<div class="dialog">
  <header class="dtitle">
    <div class="lights"><i class="r"></i><i></i><i class="g"></i></div>
    <div class="dname"><svg viewBox="0 0 26 32"><path d="M16 4q6 4 2 14l4 10-8-3Q2 28 4 15 7 4 16 4z" fill="#dfe85a" stroke="#a9b52c" stroke-width="2"/><path d="M8 24q2-12 9-18" stroke="#f8fad0" stroke-width="2" fill="none"/><path d="M10 18L22 2l3-1-3 9-7 5z" fill="#2d8a2d"/><path d="M0 24l6-1-2 6z" fill="#244d14"/></svg><span>Layer Properties - MNMapPLUTO | Style</span></div>
  </header>
  <div class="dbody">
    <nav class="side">
      <a><svg><use href="#tools"/></svg><span>General</span></a>
      <a class="act"><svg><use href="#stylei"/></svg><span>Style</span></a>
      <a><svg><use href="#labtag"/></svg><span>Labels</span></a>
      <a><svg><use href="#tabl"/></svg><span>Fields</span></a>
      <a><svg><use href="#brush"/></svg><span>Rendering</span></a>
      <a><svg><use href="#bubble"/></svg><span>Display</span></a>
      <a><svg class="big"><use href="#actions"/></svg><span>Actions</span></a>
      <a><svg class="big"><use href="#join"/></svg><span>Joins</span></a>
      <a><svg><use href="#diag"/></svg><span>Diagrams</span></a>
      <a><svg><use href="#info"/></svg><span>Metadata</span></a>
    </nav>
    <div class="split"><svg viewBox="0 0 14 18"><path d="M0 0h14v18H0z" fill="#fff"/><path d="M0 .5h14M0 17.500h14" stroke="#ddd"/><circle cx="6" cy="9" r="5" fill="#d4d4d4" stroke="#bbb"/></svg></div>
    <div class="panel">
      <div class="combo renderer"><svg class="cat" viewBox="0 0 22 32"><g stroke="#888" stroke-width="1.500"><path d="M1 1h13v6H1z" fill="#f4d500"/><path d="M8 9h13v6H8z" fill="#14b35c"/><path d="M1 17h13v6H1z" fill="#14b0b8"/><path d="M8 25h13v6H8z" fill="#c01200"/></g></svg><span>Categorized</span><svg class="ud"><use href="#updown"/></svg></div>

      <div class="row column"><label>Column</label><div class="entry"><span>LandUse</span><svg class="ud" viewBox="0 0 34 50"><path d="M12 23l5 6 5-6M17 29v6" fill="none" stroke="#fff" stroke-width="2.400"/></svg></div><div class="epsbtn">ε</div></div>

      <div class="row symbol"><label>Symbol</label><div class="btn change"><b></b><span>Change...</span></div><label class="ramplbl">Color ramp</label>
        <div class="combo ramp"><svg class="strip" viewBox="0 0 100 32"><path fill="#5c9a78" d="M0 0h100v32H0z"/><g stroke-width="2" fill="none"><path d="M1 0v32M9 0v32M45 0v32M59 0v32M77 0v32" stroke="#3aa62a"/><path d="M3 0v32M17 0v32M39 0v32M83 0v32" stroke="#e9a3c4"/><path d="M5 0v32M13 0v32M21 0v32M67 0v32M91 0v32" stroke="#b8556a"/><path d="M7 0v32M29 0v32M55 0v32M97 0v32" stroke="#9384dd"/><path d="M11 0v32M19 0v32M61 0v32M75 0v32" stroke="#e5d465"/><path d="M15 0v32M31 0v32M49 0v32M87 0v32" stroke="#6b2f75"/><path d="M23 0v32M71 0v32" stroke="#b31212"/><path d="M25 0v32M37 0v32M57 0v32M69 0v32" stroke="#55c5bd"/><path d="M27 0v32M51 0v32M65 0v32M95 0v32" stroke="#2848d0"/><path d="M73 0v32" stroke="#28f020"/><path d="M79 0v32" stroke="#ff9a30"/><path d="M33 0v32M41 0v32M43 0v32" stroke="#0d8489"/><path d="M89 0v32" stroke="#a60b8d"/><path d="M35 0v32M99 0v32" stroke="#c53343"/><path d="M81 0v32M93 0v32" stroke="#93dd68"/></g></svg><span>[source]</span><svg class="ud"><use href="#updown"/></svg></div>
        <i class="box"></i><label>Invert</label></div>

      <div class="table">
        <div class="thead"><span class="c1">Symbol<em></em></span><span class="c2">Value</span><span class="c3">Legend</span></div>
        <div class="tr"><svg class="chk"><use href="#tick"/></svg><i class="sw" style="background:#fff"></i></div>
        <div class="tr"><svg class="chk"><use href="#tick"/></svg><i class="sw" style="background:#ff0"></i><span class="v">01</span><span>One &amp; Two Family Buildings</span></div>
        <div class="tr"><svg class="chk"><use href="#tick"/></svg><i class="sw" style="background:#ffc800"></i><span class="v">02</span><span>Multi-Family Walk-Up Buildings</span></div>
        <div class="tr"><svg class="chk"><use href="#tick"/></svg><i class="sw" style="background:#e6ae00"></i><span class="v">03</span><span>Multi-Family Elevator Buildings</span></div>
        <div class="tr sel"><svg class="chk"><use href="#tick"/></svg><i class="sw" style="background:#e8884f"></i><span class="v">04</span><span>Mixed Residential &amp; Commercial Buildings</span></div>
        <div class="tr"><svg class="chk"><use href="#tick"/></svg><i class="sw" style="background:#e60000"></i><span class="v">05</span><span>Commercial &amp; Office Buildings</span></div>
        <div class="tr"><svg class="chk"><use href="#tick"/></svg><i class="sw" style="background:#8400a8"></i><span class="v">06</span><span>Industrial &amp; Manufacturing</span></div>
        <div class="tr"><svg class="chk"><use href="#tick"/></svg><i class="sw" style="background:#ebebeb"></i><span class="v">07</span><span>Transportation &amp; Utility</span></div>
        <div class="tr"><svg class="chk"><use href="#tick"/></svg><i class="sw" style="background:#73b2ff"></i><span class="v">08</span><span>Public Facilities &amp; Institutions</span></div>
        <div class="tr"><svg class="chk"><use href="#tick"/></svg><i class="sw" style="background:#a7fc7a"></i><span class="v">09</span><span>Open Space &amp; Outdoor Recreation</span></div>
        <div class="tr"><svg class="chk"><use href="#tick"/></svg><i class="sw" style="background:#ccc"></i><span class="v">10</span><span>Parking Facilities</span></div>
        <div class="tr"><svg class="chk"><use href="#tick"/></svg><i class="sw" style="background:#f9cccc"></i><span class="v">11</span><span>Vacant Land</span></div>
      </div>

      <div class="row actions"><div class="btn w151">Classify</div><div class="btn w107">Add</div><div class="btn w135">Delete</div><div class="btn w169">Delete all</div><div class="btn w107 off">Join</div><div class="btn w199 menu">Advanced<em></em></div></div>

      <div class="gtitle"><em></em>Layer rendering</div>
      <div class="group">
        <div class="grow1"><label>Layer transparency</label><div class="slider"><i></i></div><div class="spin">0</div><svg class="step" viewBox="0 0 26 44"><rect x="1" y="1" width="24" height="42" rx="11" fill="#fff" stroke="#b5b5b5" stroke-width="1.500"/><path d="M8.500 16l4.500-4.500 4.500 4.500M8.500 29l4.500 4.500 4.500-4.500" fill="none" stroke="#444" stroke-width="2.400"/></svg></div>
        <div class="grow2"><label>Layer blending mode</label><div class="combo"><span>Normal</span><svg class="ud"><use href="#updown"/></svg></div><label class="feat">Feature blending mode</label><div class="combo"><span>Normal</span><svg class="ud"><use href="#updown"/></svg></div></div>
      </div>

      <div class="row foot"><div class="btn w113">Help</div><div class="btn w142 menu">Style<em></em></div><div class="btn w126">Apply</div><div class="btn w137 cancel">Cancel</div><div class="btn w138 ok">OK</div></div>
    </div>
  </div>
</div>
</body>
</html>
```
FILE: styles.css
```css
* { box-sizing: border-box; }
html, body { margin: 0; height: 100%; }
body { background: #000; font: 26px/30px "Liberation Sans", Arial, sans-serif; color: #000; overflow: hidden; position: relative; width: 2345px; height: 1481px; white-space: nowrap; }
svg { display: block; flex: none; overflow: visible; }
i, em, b, u { flex: none; font-style: normal; text-decoration: none; }
.defs { position: absolute; }

.app { display: flex; flex-direction: column; height: 1481px; padding-top: 2px; }
.titlebar { display: flex; align-items: center; height: 43px; background: #f6f6f6; border-bottom: 2px solid #cfcfcf; border-top-left-radius: 8px; padding-left: 16px; flex: none; }
.lights { display: flex; gap: 16px; width: 120px; }
.lights i { width: 24px; height: 24px; border-radius: 50%; background: #dcdcdc; border: 1px solid #cdcdcd; }
.apptitle { margin-left: 1119px; color: #b2b2b2; font-size: 27px; letter-spacing: .15px; padding-top: 2px; }

.toolbar { display: flex; align-items: center; height: 72px; flex: none; background: linear-gradient(#f0f0f0, #c6c6c6); border-top: 2px solid #fff; border-bottom: 2px solid #a9a9a9; overflow: hidden; }
.tool { width: 76px; height: 68px; display: flex; align-items: center; justify-content: center; flex: none; }
.tool svg { width: 48px; height: 48px; }
.tool.wide { width: 100px; justify-content: flex-start; padding-left: 25px; gap: 5px; }
.tool.wide em, .tool.drop em { border: solid transparent; border-width: 15px 7px 0; border-top-color: #6a6a6a; margin-top: 21px; }
.tool.drop { gap: 0; padding-left: 4px; }
.tool.drop em { margin: 34px 0 0 -10px; border-top-color: #888; border-width: 11px 7px 0; }
.tool.drop svg { width: 48px; }
.tool.last { margin-left: 4px; }
.tool.on { width: 68px; margin: 0 4px; background: linear-gradient(#d2d2d2, #9e9e9e); box-shadow: inset 1px 0 #8f8f8f, inset -1px 0 #8f8f8f; }
.dim svg, .faded { opacity: .5; }
.dim2 svg { opacity: .68; }
.grip { width: 18px; height: 48px; background: radial-gradient(circle at 3px 3px, #fff 2px, transparent 2.500px) 9px 0 / 10px 12px repeat-y, radial-gradient(circle at 3px 3px, #fff 2px, transparent 2.500px) 13px 6px / 10px 12px repeat-y; }
.grip.lead { width: 20px; background-position: 13px 0, 17px 6px; }

.work { display: flex; flex: 1; min-height: 0; }
.docks { width: 440px; flex: none; background: #ebebeb; display: flex; flex-direction: column; border-right: 4px solid #b5b5b5; }
.map { width: 1905px; height: 1292px; }
.dock h2 { margin: 0; height: 52px; display: flex; align-items: center; gap: 12px; padding: 0 0 4px 6px; font-size: 22px; font-weight: normal; background: linear-gradient(#f6f6f6, #c9c9c9); border-top: 2px solid #fff; border-bottom: 2px solid #b3b3b3; }
.ctl { width: 28px; height: 28px; fill: #444; }
.ctl path { stroke: #fff; fill: none; }
.dt { margin-left: 133px; padding-top: 1px; }
.layers .dt { margin-left: 140px; }
.dtools { display: flex; height: 64px; padding-top: 0; border-bottom: 2px solid #8a8a8a; }
.near { gap: 12px; }
.far { gap: 16px; padding: 0 0 0 10px; height: 74px; }
.dtools span { width: 52px; height: 52px; flex: none; border: 2px solid #c8c8c8; background: #efefef; display: flex; align-items: center; justify-content: center; }
.dtools svg { width: 32px; height: 32px; }
.near svg { width: 29px; height: 31px; }
.near span:nth-child(4) svg { width: 32px; }
.tree, .lay { list-style: none; margin: 0; padding: 0; background: #fff; border-left: 2px solid #b5b5b5; }
.tree { height: 460px; border-bottom: 2px solid #999; }
.tree li { height: 36px; display: flex; align-items: center; padding: 0 0 2px 14px; }
.tree li svg { width: 32px; height: 32px; margin: 3px 12px 0 0; }
.tree li i { width: 36px; }
.exp::before { content: ""; display: block; width: 0; border: solid transparent; border-width: 10px 0 10px 15px; border-left-color: #8b8b8b; margin-top: 4px; }
.cur .exp::before { margin-top: 1px; }
.browser { flex: none; height: 574px; overflow: hidden; }
.layers { flex: 1; display: flex; flex-direction: column; border-top: 2px solid #b3b3b3; }
.lay { flex: 1; font-weight: bold; }
.lay li { display: flex; align-items: center; height: 40px; padding-left: 14px; }
.lay li > i { width: 40px; }
.lay span { padding-bottom: 2px; }
.ck { width: 28px; height: 28px; color: #999; border: 2px solid #d4d4d4; border-radius: 5px; margin-right: 26px; background: rgba(255,255,255,.5); }
.lay u { width: 32px; height: 32px; margin-right: 12px; }
.lay .light { background: #ccc; }
.lay .dark { background: #999; }
.lay .dot { width: 14px; height: 14px; border: 2.500px solid #111; border-radius: 50%; background: #d78fd2; margin: 0 21px 0 9px; }
.pl { width: 32px; height: 24px; margin-right: 12px; }
.lay .cur { background: #cfcfcf; }
.cur .ck { color: #777; border-color: #bbb; }
.cur span { text-decoration: underline; text-decoration-thickness: 2px; text-underline-offset: 4px; }

/* dialog window */
.dialog { position: absolute; left: 366px; top: 153px; width: 1920px; height: 1294px; border-radius: 9px; background: #ebebeb; box-shadow: 0 0 2px rgba(0,0,0,.6), 0 26px 50px rgba(0,0,0,.55); overflow: hidden; display: flex; flex-direction: column; }
.dialog header { height: 44px; flex: none; background: linear-gradient(#eee, #d2d2d2); border-top: 2px solid #f6f6f6; border-bottom: 2px solid #b0b0b0; display: flex; align-items: center; padding-left: 16px; }
.dialog .lights i { background: #d0d0d0; border-color: #b8b8b8; }
.dialog .lights .r { background: #fc5b57; border-color: #e2463f; }
.dialog .lights .g { background: #33c748; border-color: #1ca42c; }
.dname { display: flex; align-items: center; gap: 10px; margin-left: 555px; color: #444; font-size: 27px; letter-spacing: .23px; }
.dname svg { width: 26px; height: 32px; }
.dname span { padding-bottom: 0; }
.dbody { display: flex; flex: 1; }
.side { width: 300px; background: #5c5c5c; color: #fff; }
.side a { height: 72px; display: flex; align-items: center; padding-left: 14px; gap: 16px; }
.side span { padding-bottom: 2px; }
.side svg { width: 48px; height: 48px; }
.side .big { width: 54px; height: 50px; margin: 0 0 0 -6px; }
.side .act { background: #ebebeb; color: #000; padding-left: 20px; gap: 24px; }
.split { width: 14px; display: flex; align-items: center; }
.split svg { width: 14px; height: 18px; margin-top: -10px; position: relative; top: 5px; }
.panel { padding: 10px 14px 0 9px; width: 1606px; display: flex; flex-direction: column; }
.row { display: flex; flex: none; }

.combo { display: flex; align-items: center; height: 42px; flex: none; background: #fff; border: 2px solid; border-color: #c6c6c6 #c0c0c0 #a8a8a8; border-radius: 8px; overflow: hidden; padding-left: 16px; }
.combo span { padding-bottom: 8px; flex: 1; }
.ud { width: 34px; height: 42px; background: linear-gradient(#6cb3fa, #1478fd); margin: -2px -2px -2px 0; }
.renderer { width: 318px; margin-left: 7px; padding-left: 24px; }
.cat { width: 21px; height: 32px; margin-right: 11px; }
.column { margin-top: 30px; height: 54px; }
.column label { width: 114px; padding: 10px 0 0 3px; }
.entry { width: 659px; height: 50px; margin-top: 4px; background: #fff; border: 2px solid #bdbdbd; border-right: 0; border-radius: 0 8px 8px 0; display: flex; padding: 4px 0 0 5px; overflow: hidden; }
.entry span { flex: 1; }
.entry .ud { height: 50px; margin: -6px 0 0; }
.epsbtn { width: 52px; height: 52px; margin-left: 20px; border: 2px solid #adadad; background: linear-gradient(#e2e2e2, #f6f6f6); font: 44px/38px "Liberation Serif", serif; color: #5f3a68; text-align: center; }
.btn { height: 42px; flex: none; background: #fff; border: 2px solid; border-color: #c6c6c6 #c0c0c0 #a8a8a8; border-radius: 8px; text-align: center; line-height: 30px; box-shadow: 0 1px 1px rgba(0,0,0,.08); }
.symbol { margin-top: 34px; height: 42px; }
.symbol label { padding: 2px 0 0 3px; }
.symbol label:first-child { width: 107px; margin-right: 0; }
.change { width: 586px; display: flex; padding-left: 212px; gap: 12px; }
.change b { width: 32px; height: 32px; margin-top: 2px; background: #0c86df; border: 2px solid #075b9a; }
.ramplbl { width: 147px; margin-left: 17px; }
.ramp { width: 587px; padding-left: 17px; }
.strip { width: 100px; height: 32px; margin-right: 6px; }
.box { width: 28px; height: 28px; margin: 6px 5px 0 24px; border: 2px solid #bcbcbc; border-radius: 5px; background: #fff; }

.table { margin-top: 30px; height: 560px; flex: none; background: #fff; border: 6px solid #64a9f7; border-left-width: 5px; border-radius: 3px; }
.thead { display: flex; height: 34px; background: #f5f5f5; border-bottom: 2px solid #c8c8c8; align-items: center; padding: 0 0 6px 8px; }
.c1 { width: 129px; border-right: 1px solid #ccc; height: 26px; line-height: 29px; display: flex; gap: 13px; }
.c1 em { border: solid transparent; border-width: 15px 8px 0; border-top-color: #777; margin-top: 9px; }
.c2 { width: 115px; padding-left: 9px; border-right: 1px solid #ccc; height: 26px; line-height: 29px; }
.c3 { padding-left: 10px; height: 26px; line-height: 29px; }
.tr { display: flex; height: 40px; padding-left: 14px; line-height: 22px; }
.tr.sel { background: #0a4ed0; color: #fff; }
.chk { width: 28px; height: 28px; margin-top: 6px; background: #3f99f7; border-radius: 5px; color: #fff; }
.sw { width: 32px; height: 32px; margin: 4px 48px 0 26px; border: 2px solid rgba(0,0,0,.13); }
.v { width: 116px; }

.actions { margin: 32px 0 0 15px; gap: 29px; }
.off { margin-left: auto; background: #f3f3f3; border-color: #d5d5d5; color: #8a8a8a; }
.actions .menu { margin-right: 16px; }
.menu { display: flex; justify-content: center; padding-left: 0; }
.menu em { border: solid transparent; border-width: 10px 7px 0; border-top-color: #222; margin: 26px -18px 0 11px; }
.w107 { width: 107px; } .w113 { width: 113px; } .w126 { width: 126px; } .w135 { width: 135px; } .w137 { width: 137px; }
.w138 { width: 138px; } .w142 { width: 142px; } .w151 { width: 151px; } .w169 { width: 169px; } .w199 { width: 199px; }

.gtitle { display: flex; margin: 32px 0 0 8px; height: 38px; gap: 17px; }
.gtitle em { border: solid transparent; border-width: 14px 11.500px 0; border-top-color: #444; margin-top: 12px; }
.group { height: 178px; flex: none; margin: 0 4px 0 3px; background: #e3e3e3; border: 2px solid #b8b8b8; border-radius: 9px; padding: 32px 24px 0 24px; }
.grow1 { display: flex; align-items: center; height: 44px; }
.grow1 label { width: 384px; padding-bottom: 2px; }
.slider { width: 1010px; height: 6px; border-radius: 3px; background: #b0b0b0; display: flex; align-items: center; padding-left: 4px; }
.slider i { width: 33px; height: 33px; border-radius: 50%; background: #fff; border: 2px solid #b9b9b9; margin-top: 3px; }
.spin { width: 70px; height: 44px; margin-left: 26px; background: #fff; border: 2px solid #b5b5b5; padding: 4px 0 0 4px; }
.step { width: 26px; height: 44px; margin: 2px 0 0 6px; }
.grow2 { display: flex; margin-top: 34px; height: 42px; }
.grow2 label { width: 382px; padding-top: 2px; }
.grow2 .feat { width: 382px; margin-left: 20px; }
.grow2 .combo { width: 370px; }
.foot { margin: 64px 4px 0 3px; gap: 28px; }
.cancel { margin-left: auto; }
.ok { background: linear-gradient(#6cb3fa, #1478fd); border-color: #58a2ee #2b83f0 #1068e8; }
```
